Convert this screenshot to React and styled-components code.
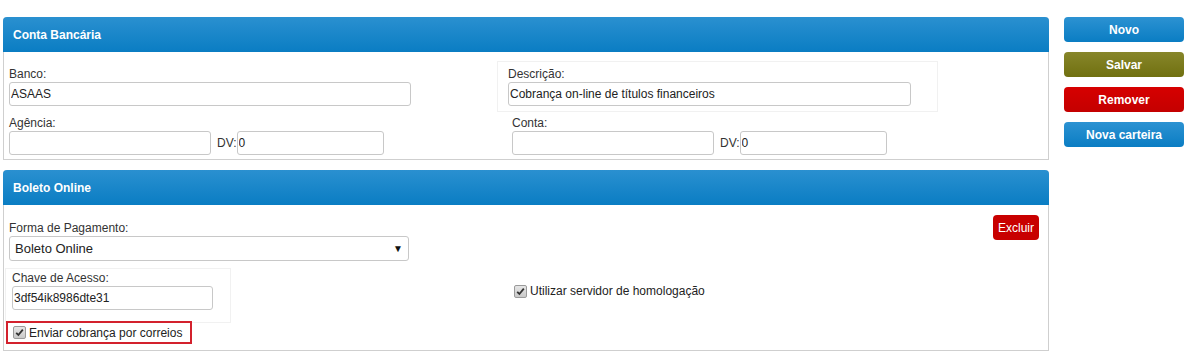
import React from "react";
import styled, { createGlobalStyle } from "styled-components";

const Global = createGlobalStyle`
  html, body { margin: 0; padding: 0; background: #fff; }
  body { font-family: "Liberation Sans", Arial, sans-serif; font-size: 12px; color: #333; }
`;

const Page = styled.div`
  display: flex;
  align-items: flex-start;
  padding: 17px 0 0 3px;
`;

const Main = styled.div`
  width: 1046px;
  display: flex;
  flex-direction: column;
  gap: 10px;
`;

const Side = styled.div`
  margin-left: 15px;
  width: 120px;
  display: flex;
  flex-direction: column;
  gap: 10px;
`;

const colors = {
  blue: "linear-gradient(#2c92d2, #0a7dc3)",
  olive: "linear-gradient(#87862a, #707010)",
  red: "linear-gradient(#d60000, #c40000)",
};

const SideButton = styled.button`
  height: 25px;
  border: 0;
  border-radius: 4px;
  background: ${(p) => colors[p.$tone]};
  color: #fff;
  font-family: "Liberation Sans", Arial, sans-serif;
  font-weight: bold;
  font-size: 12px;
  padding: 0;
  cursor: pointer;
`;

const Panel = styled.section`
  border: 1px solid #cfcfcf;
  border-top: 0;
  border-radius: 4px 4px 0 0;
  background: #fff;
`;

const PanelHeader = styled.div`
  height: 35px;
  margin: 0 -1px;
  border-radius: 4px 4px 0 0;
  background: linear-gradient(#2a90d0, #0a7dc3);
  color: #fff;
  font-weight: bold;
  font-size: 12px;
  display: flex;
  align-items: center;
  padding-left: 10px;
`;

const Row = styled.div`
  display: flex;
  align-items: flex-start;
  justify-content: ${(p) => (p.$spread ? "space-between" : "flex-start")};
  padding: ${(p) => p.$pad || "0"};
  margin-top: ${(p) => p.$mt || 0}px;
`;

const Cell = styled.div`
  width: ${(p) => p.$w}px;
  padding: ${(p) => p.$pad || "0"};
  margin-left: ${(p) => p.$ml || 0}px;
  border: 1px solid ${(p) => (p.$framed ? "#f1f1f1" : "transparent")};
  box-sizing: border-box;
  flex: none;
  white-space: nowrap;
`;

const Label = styled.div`
  line-height: 14px;
  height: 14px;
  margin-bottom: 1px;
  color: #333;
  font-size: 12px;
`;

const Input = styled.input`
  box-sizing: border-box;
  width: ${(p) => p.$w}px;
  height: 24px;
  border: 1px solid #c8c8c8;
  border-radius: 3px;
  padding: 0 1px;
  font-family: "Liberation Sans", Arial, sans-serif;
  font-size: 12px;
  color: #222;
  background: #fff;
  outline: none;
`;

const Inline = styled.div`
  display: flex;
  align-items: center;
`;

const DvText = styled.span`
  margin: 0 0 0 6px;
  font-size: 12px;
  color: #333;
`;

const SelectBox = styled.div`
  box-sizing: border-box;
  width: 400px;
  height: 25px;
  border: 1px solid #c8c8c8;
  border-radius: 3px;
  display: flex;
  align-items: center;
  justify-content: space-between;
  padding: 0 5px 0 5px;
  font-size: 13px;
  color: #222;
`;

const Arrow = styled.span`
  font-size: 10px;
  color: #111;
`;

const DangerButton = styled.button`
  height: 25px;
  padding: 0 5px;
  border: 0;
  border-radius: 4px;
  background: #c80000;
  color: #fff;
  font-family: "Liberation Sans", Arial, sans-serif;
  font-size: 12px;
  cursor: pointer;
`;

const CheckRow = styled.label`
  display: inline-flex;
  align-items: center;
  gap: 3px;
  font-size: 12px;
  color: #222;
  white-space: nowrap;
  ${(p) =>
    p.$highlight &&
    `
    border: 2px solid #d3212d;
    padding: 0 8px 0 5px;
    height: 23px;
    box-sizing: border-box;
  `}
`;

const Box = styled.span`
  width: 11px;
  height: 11px;
  border: 1px solid #9a9a9a;
  border-radius: 2px;
  background: linear-gradient(#e6e6e6, #c9c9c9);
  display: inline-flex;
  align-items: center;
  justify-content: center;
  flex: none;
`;

const Check = () => (
  <Box>
    <svg width="9" height="9" viewBox="0 0 9 9">
      <path d="M1.2 4.8 L3.4 7 L7.8 1.6" fill="none" stroke="#333" strokeWidth="1.8" />
    </svg>
  </Box>
);

export default function App() {
  return (
    <>
      <Global />
      <Page>
        <Main>
          <Panel>
            <PanelHeader>Conta Bancária</PanelHeader>
            <Row $pad="9px 0 0 0">
              <Cell $w={493} $pad="5px 0 5px 4px">
                <Label>Banco:</Label>
                <Input $w={402} defaultValue="ASAAS" />
              </Cell>
              <Cell $w={441} $framed $pad="5px 0 5px 10px">
                <Label>Descrição:</Label>
                <Input $w={403} defaultValue="Cobrança on-line de títulos financeiros" />
              </Cell>
            </Row>
            <Row $pad="3px 0 3px 0">
              <Cell $w={507} $pad="0 0 0 4px">
                <Label>Agência:</Label>
                <Inline>
                  <Input $w={202} />
                  <DvText>DV:</DvText>
                  <Input $w={147} defaultValue="0" />
                </Inline>
              </Cell>
              <Cell $w={420}>
                <Label>Conta:</Label>
                <Inline>
                  <Input $w={202} />
                  <DvText>DV:</DvText>
                  <Input $w={147} defaultValue="0" />
                </Inline>
              </Cell>
            </Row>
          </Panel>

          <Panel>
            <PanelHeader>Boleto Online</PanelHeader>
            <Row $spread $pad="10px 9px 0 0">
              <Cell $w={420} $pad="5px 0 0 4px">
                <Label>Forma de Pagamento:</Label>
                <SelectBox>
                  <span>Boleto Online</span>
                  <Arrow>▼</Arrow>
                </SelectBox>
              </Cell>
              <DangerButton>Excluir</DangerButton>
            </Row>
            <Row $pad="6px 0 0 0">
              <Cell $w={226} $framed $ml={1} $pad="2px 0 12px 6px">
                <Label>Chave de Acesso:</Label>
                <Input $w={201} defaultValue="3df54ik8986dte31" />
              </Cell>
              <Cell $w={600} $pad="15px 0 0 282px">
                <CheckRow>
                  <Check />
                  Utilizar servidor de homologação
                </CheckRow>
              </Cell>
            </Row>
            <Row $pad="0 0 6px 2px" $mt={-2}>
              <CheckRow $highlight>
                <Check />
                Enviar cobrança por correios
              </CheckRow>
            </Row>
          </Panel>
        </Main>
        <Side>
          <SideButton $tone="blue">Novo</SideButton>
          <SideButton $tone="olive">Salvar</SideButton>
          <SideButton $tone="red">Remover</SideButton>
          <SideButton $tone="blue">Nova carteira</SideButton>
        </Side>
      </Page>
    </>
  );
}
